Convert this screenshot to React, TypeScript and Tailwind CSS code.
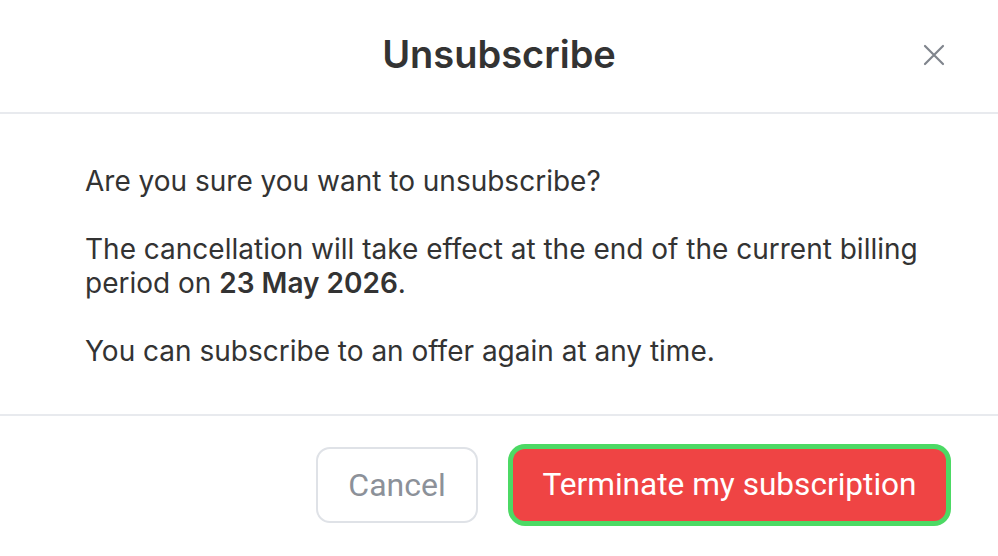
import React from "react";

export default function App() {
  return (
    <div className="w-[998px] h-[556px] bg-white flex flex-col overflow-hidden" style={{ fontFamily: "Inter, 'Noto Sans', sans-serif" }}>
      <div className="relative h-[114px] shrink-0 border-b-2 border-[#e8eaee] flex items-center justify-center">
        <h1 className="text-[38px] font-semibold text-[#333333] leading-none -mt-[4px]">Unsubscribe</h1>
        <button className="absolute right-[52px] top-[43px] w-[24px] h-[24px] flex items-center justify-center text-[#80858d]">
          <svg width="22" height="22" viewBox="0 0 22 22" fill="none" stroke="currentColor" strokeWidth="2.2" strokeLinecap="round">
            <path d="M2 2 L20 20 M20 2 L2 20" />
          </svg>
        </button>
      </div>
      <div className="h-[300px] shrink-0 pl-[85px] pr-[60px] pt-[50px] text-[28px] leading-[34px] text-[#333333]">
        <p className="mb-[34px]">Are you sure you want to unsubscribe?</p>
        <p className="mb-[34px]">
          The cancellation will take effect at the end of the current billing period on <span className="font-semibold">23 May 2026</span>.
        </p>
        <p>You can subscribe to an offer again at any time.</p>
      </div>
      <div className="flex-1 border-t-2 border-[#e8eaee] flex items-start justify-end pr-[52px] pt-[31px] gap-[35px]" style={{ fontFamily: "Roboto, 'Noto Sans', sans-serif" }}>
        <button className="w-[162px] h-[76px] rounded-[14px] border-2 border-[#dfe2e7] bg-white text-[32px] text-[#8c9199]">Cancel</button>
        <button className="mt-[2px] w-[433px] h-[72px] rounded-[12px] bg-[#ef4444] text-white text-[31.6px] shadow-[0_0_0_5px_#4cd964]">Terminate my subscription</button>
      </div>
    </div>
  );
}
